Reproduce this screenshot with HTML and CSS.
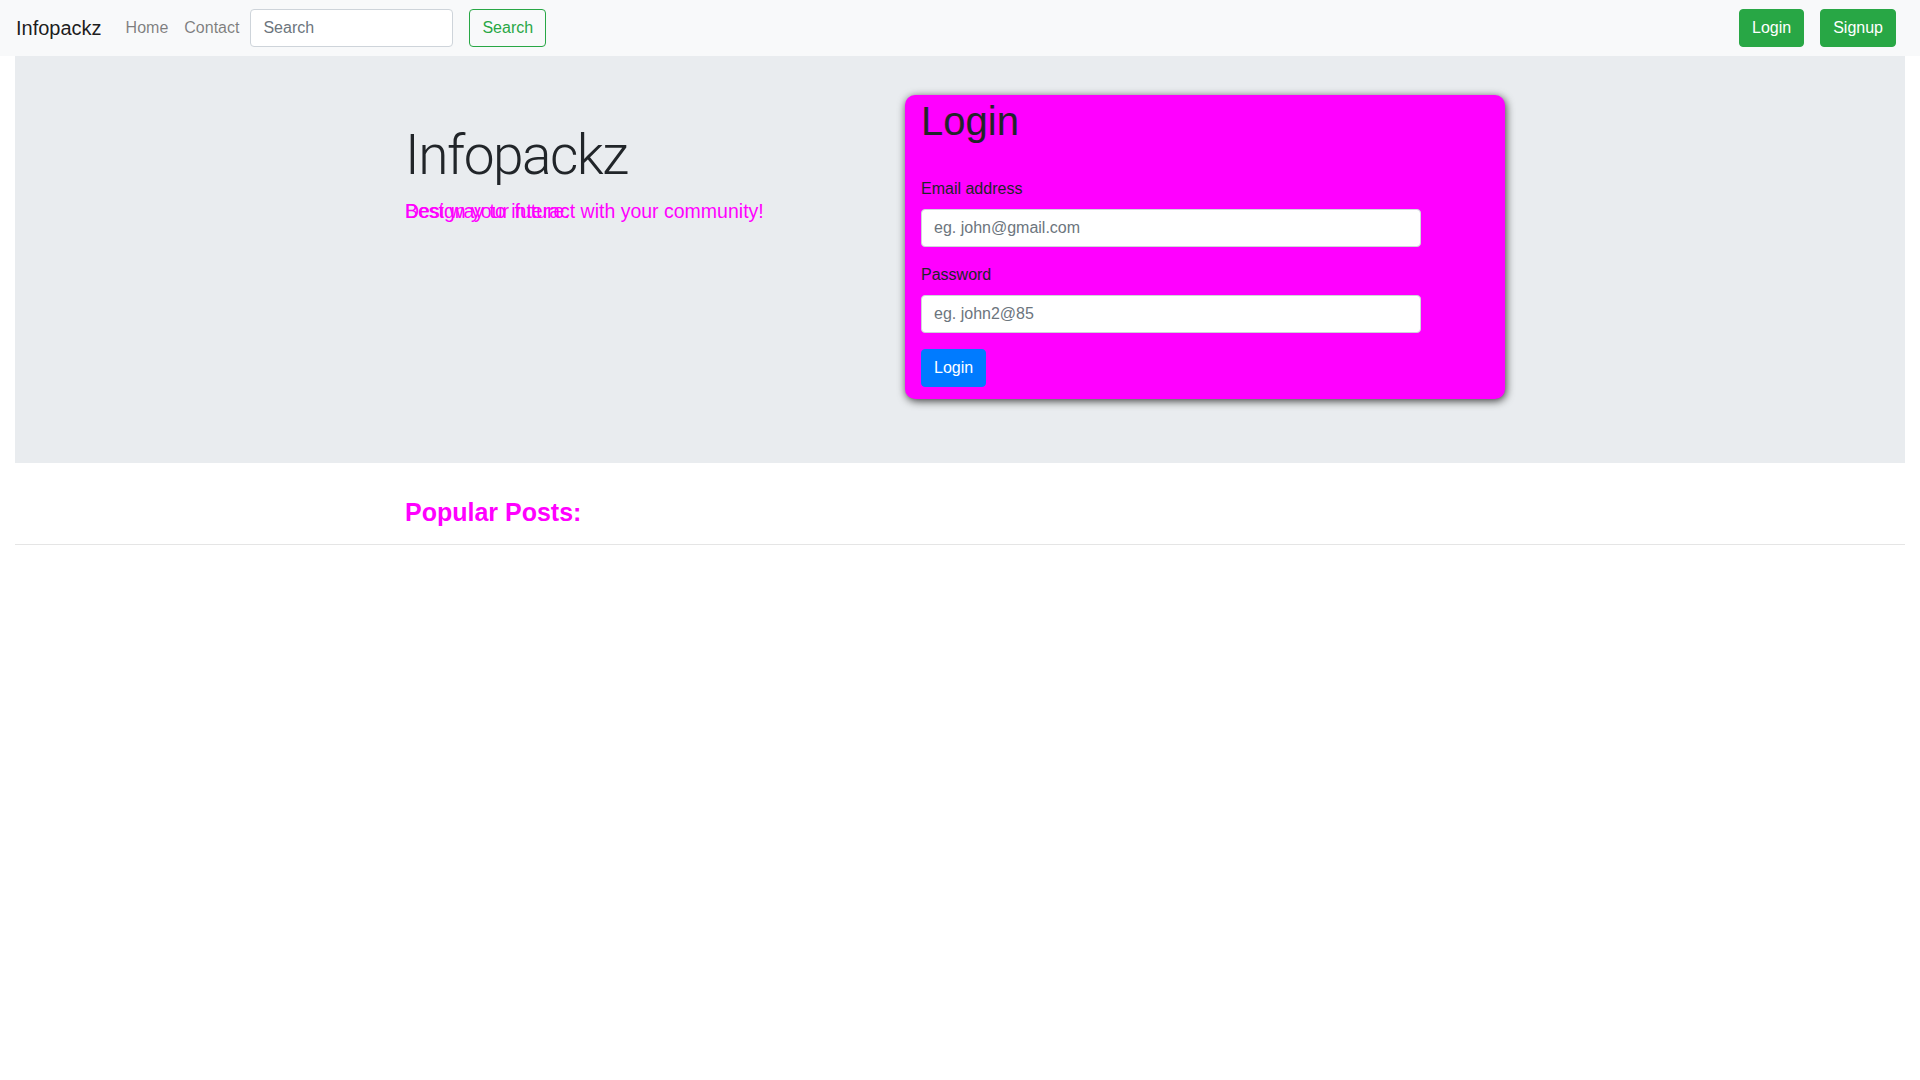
FILE: index.html
```html
<!DOCTYPE html>
<html lang="en">
<head>
<meta charset="utf-8">
<title>Infopackz</title>
<link rel="stylesheet" href="styles.css">
</head>
<body>
<nav class="navbar">
  <a class="brand" href="#">Infopackz</a>
  <a class="nav-link" href="#">Home</a>
  <a class="nav-link" href="#">Contact</a>
  <form class="search-form">
    <input class="form-control search-input" type="search" placeholder="Search">
    <button class="btn btn-outline-success" type="button">Search</button>
  </form>
  <div class="nav-right">
    <button class="btn btn-success" type="button">Login</button>
    <button class="btn btn-success" type="button">Signup</button>
  </div>
</nav>
<div class="page">
  <div class="jumbotron">
    <div class="container hero">
      <div class="hero-left">
        <h1 class="display">Infopackz</h1>
        <p class="lead"><span class="lead-a">Best way to interact with your community!</span><span class="lead-b">Design your future.</span></p>
      </div>
      <div class="login-card">
        <h1 class="card-title">Login</h1>
        <form>
          <div class="form-group">
            <label class="label">Email address</label>
            <input class="form-control card-input" type="email" placeholder="eg. john@gmail.com">
          </div>
          <div class="form-group">
            <label class="label">Password</label>
            <input class="form-control card-input" type="text" placeholder="eg. john2@85">
          </div>
          <button class="btn btn-primary" type="button">Login</button>
        </form>
      </div>
    </div>
  </div>
  <div class="container">
    <h3 class="popular">Popular Posts:</h3>
  </div>
  <hr class="divider">
</div>
</body>
</html>
```
FILE: styles.css
```css
* { box-sizing: border-box; }
html, body { margin: 0; padding: 0; }
body {
  font-family: "Liberation Sans", Arial, Helvetica, sans-serif;
  font-size: 16px;
  line-height: 1.5;
  color: #212529;
  background: #fff;
}
a { text-decoration: none; }

.navbar {
  display: flex;
  align-items: center;
  height: 56px;
  padding: 8px 16px;
  background: #f8f9fa;
}
.brand {
  font-size: 20px;
  line-height: 30px;
  color: rgba(0,0,0,.9);
  margin-right: 16px;
}
.nav-link {
  padding: 8px;
  color: rgba(0,0,0,.5);
  line-height: 24px;
}
.search-form {
  display: flex;
  align-items: center;
  margin-left: 3px;
}
.form-control {
  display: block;
  height: 38px;
  padding: 6px 12px;
  font-family: inherit;
  font-size: 16px;
  line-height: 1.5;
  color: #495057;
  background: #fff;
  border: 1px solid #ced4da;
  border-radius: 4px;
  outline: none;
}
.form-control::placeholder { color: #6c757d; opacity: 1; }
.search-input { width: 203px; margin-right: 16px; }

.btn {
  display: inline-block;
  height: 38px;
  padding: 6px 12px;
  font-family: inherit;
  font-size: 16px;
  line-height: 24px;
  border: 1px solid transparent;
  border-radius: 4px;
  cursor: pointer;
}
.btn-outline-success { color: #28a745; border-color: #28a745; background: transparent; }
.btn-success { color: #fff; background: #28a745; border-color: #28a745; margin: 0 8px; }
.btn-primary { color: #fff; background: #007bff; border-color: #007bff; }
.nav-right { margin-left: auto; display: flex; }

.page { padding: 0 15px; }
.jumbotron {
  background: #e9ecef;
  padding: 39px 32px 64px;
  margin-bottom: 34px;
}
.container {
  max-width: 1140px;
  margin: 0 auto;
  padding: 0 15px;
}
.hero { display: flex; align-items: flex-start; }
.hero-left { width: 500px; padding-top: 27px; }
.display {
  margin: 0 0 7px;
  font-family: "Roboto", "Liberation Sans", sans-serif;
  font-weight: 300;
  font-size: 55px;
  letter-spacing: -1.5px;
  line-height: 67px;
  color: #212529;
}
.lead {
  position: relative;
  margin: 0;
  font-size: 19.5px;
  line-height: 30px;
  color: #ff00ff;
}
.lead-b { position: absolute; left: 0; top: 0; white-space: nowrap; }

.login-card {
  width: 600px;
  background: #ff00ff;
  border-radius: 10px;
  padding: 2px 16px 12px;
  box-shadow: 1px 2px 8px rgba(0,0,0,.75);
}
.card-title {
  margin: 0 0 32px;
  font-size: 40px;
  font-weight: 400;
  line-height: 48px;
  color: #212529;
}
.form-group { margin-bottom: 16px; }
.label { display: block; margin-bottom: 8px; color: #212529; }
.card-input { width: 500px; }

.popular {
  margin: 0;
  font-size: 25px;
  font-weight: 700;
  line-height: 30px;
  color: #ff00ff;
}
.divider {
  margin: 17px 0 0;
  border: 0;
  border-top: 1px solid rgba(0,0,0,.1);
}
```
